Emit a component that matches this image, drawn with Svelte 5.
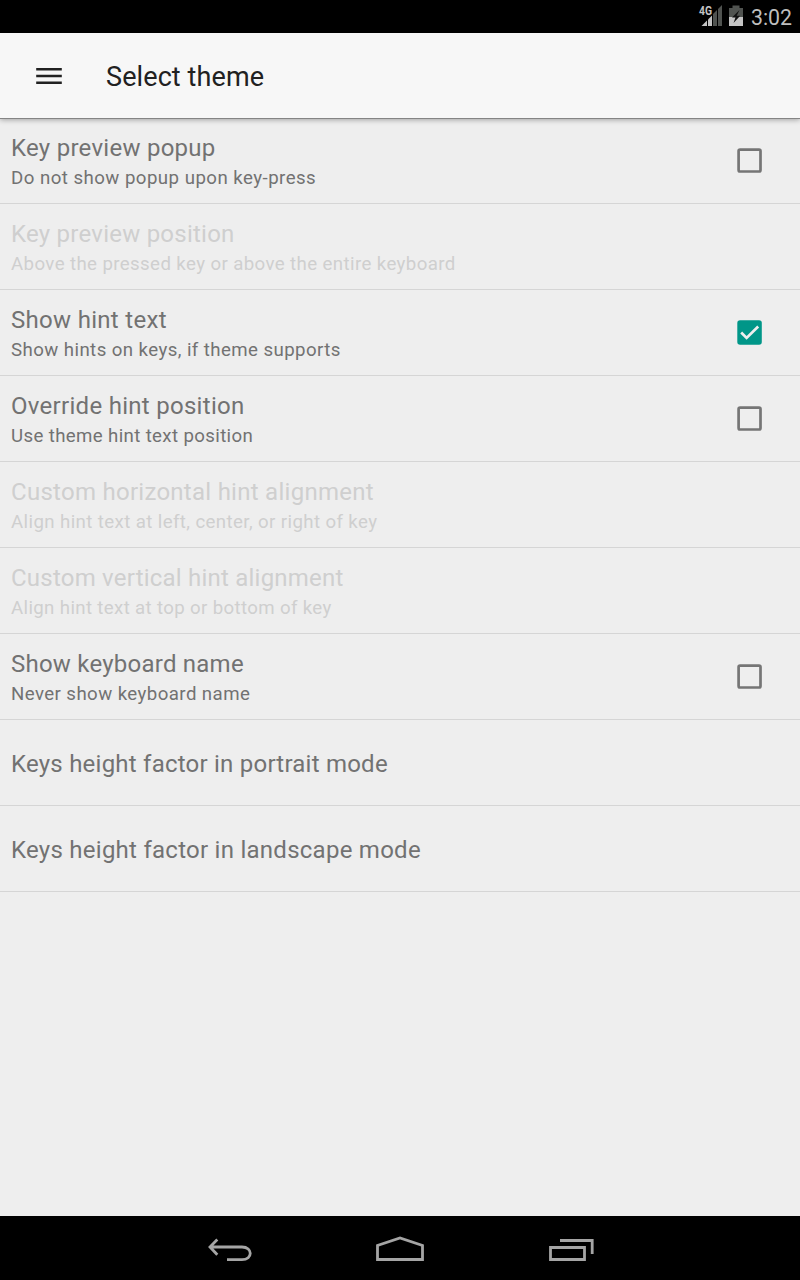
<script>
  const rows = [
    { title: 'Key preview popup', summary: 'Do not show popup upon key-press', box: true, track: [0.26, 0.46] },
    { title: 'Key preview position', summary: 'Above the pressed key or above the entire keyboard', disabled: true, track: [0.24, 0.39] },
    { title: 'Show hint text', summary: 'Show hints on keys, if theme supports', box: true, checked: true, track: [0.3, 0.42] },
    { title: 'Override hint position', summary: 'Use theme hint text position', box: true, track: [0.29, 0.36] },
    { title: 'Custom horizontal hint alignment', summary: 'Align hint text at left, center, or right of key', disabled: true, track: [0.27, 0.39] },
    { title: 'Custom vertical hint alignment', summary: 'Align hint text at top or bottom of key', disabled: true, track: [0.22, 0.35] },
    { title: 'Show keyboard name', summary: 'Never show keyboard name', box: true, track: [0.23, 0.42] },
    { title: 'Keys height factor in portrait mode', track: [0.23, 0] },
    { title: 'Keys height factor in landscape mode', track: [0.26, 0] }
  ];
</script>

<div class="screen">
  <div class="status">
    <svg width="46" height="33" viewBox="0 0 46 33">
      <path d="M3.5 26L9 20.5V26Z" fill="#c4c4c4" />
      <path d="M10 19.5L14 15.5V26H10Z" fill="#c4c4c4" />
      <path d="M15 14L19 10V26H15ZM20 9L24 5V26H20Z" fill="#505350" />
      <text x="1" y="15.2" class="net" textLength="13" lengthAdjust="spacingAndGlyphs">4G</text>
      <path d="M34.5 5.5H41.5V8H45V17H31V8H34.5Z" fill="#505350" />
      <path d="M31 17H45V26H31Z" fill="#c4c4c4" />
      <path d="M41.5 10L34 17.5H37.5L35.5 23L42.2 15.8H38.7Z" fill="#111" />
    </svg>
    <span class="clock">3:02</span>
  </div>

  <header>
    <svg width="32" height="32" viewBox="0 0 32 32">
      <path d="M3.2 9.2H28.8M3.2 16H28.8M3.2 22.8H28.8" stroke="#212121" stroke-width="2.5" />
    </svg>
    <h1>Select theme</h1>
  </header>

  <main>
    {#each rows as row}
      <div class="row" class:disabled={row.disabled}>
        <div class="text">
          <div class="title" style:letter-spacing="{row.track[0]}px">{row.title}</div>
          {#if row.summary}<div class="summary" style:letter-spacing="{row.track[1]}px">{row.summary}</div>{/if}
        </div>
        {#if row.box}
          <svg class="check" width="32" height="32" viewBox="0 0 32 32">
            {#if row.checked}
              <rect x="3.3" y="3.3" width="24.5" height="24.5" rx="2.8" fill="#009688" />
              <path d="M7.2 15.5L12.6 20.9L24.2 9.5" fill="none" stroke="#eee" stroke-width="2.7" />
            {:else}
              <rect x="4.6" y="4.6" width="21.9" height="21.9" rx="1.5" fill="none" stroke="#757575" stroke-width="2.7" />
            {/if}
          </svg>
        {/if}
      </div>
    {/each}
  </main>

  <nav>
    <svg width="48" height="64" viewBox="0 0 48 64">
      <path d="M5 31H37C48 31 48 43.7 37 43.7H22M12.3 23.5L5 31L12.3 38.8" />
    </svg>
    <svg width="52" height="64" viewBox="0 0 52 64">
      <path d="M3.5 43.5V29.5L26 22L48.5 29.5V43.5Z" />
    </svg>
    <svg width="48" height="64" viewBox="0 0 48 64">
      <path d="M3.5 31.5H37.5V43.5H3.5ZM13 24.5H45.2V38" />
    </svg>
  </nav>
</div>

<style>
  :global(body) { margin: 0; background: #eee; }
  .screen {
    width: 800px;
    height: 1280px;
    display: flex;
    flex-direction: column;
    background: #eee;
    font-family: Roboto, sans-serif;
    overflow: hidden;
  }
  .status {
    height: 33px;
    background: #000;
    display: flex;
    justify-content: flex-end;
    box-sizing: border-box;
    padding-right: 8px;
    gap: 7px;
  }
  .net { font: bold 12px Roboto, sans-serif; fill: #c4c4c4; stroke: #000; stroke-width: 2px; paint-order: stroke; }
  .clock { color: #bebebe; font-size: 21.3px; line-height: 35px; }
  header {
    height: 85px;
    flex: none;
    background: #f7f7f7;
    border-bottom: 1px solid #848484;
    box-shadow: 0 1px 5px rgba(0, 0, 0, 0.32);
    display: flex;
    align-items: center;
    padding-left: 33px;
    gap: 41px;
    z-index: 1;
  }
  h1 { margin: 2px 0 0; font-size: 27px; font-weight: 400; color: #212121; line-height: 32px; letter-spacing: 0.1px; }
  main { flex: 1; margin-top: -1px; }
  .row {
    height: 86px;
    box-sizing: border-box;
    border-bottom: 1px solid #d5d5d5;
    display: flex;
    align-items: center;
    justify-content: space-between;
    padding: 0 34px 0 11px;
    color: #727272;
  }
  .disabled { color: #cfcfcf; }
  .text { padding-top: 2px; white-space: nowrap; }
  .title { font-size: 24px; line-height: 32px; }
  .title:not(:last-child) { line-height: 31px; }
  .summary { font-size: 18.67px; line-height: 25px; margin-top: 2px; }
  nav {
    height: 64px;
    flex: none;
    background: #000;
    display: flex;
    justify-content: center;
    gap: 121px;
  }
  nav path { fill: none; stroke: #a5a5a5; stroke-width: 2.8; }
</style>
